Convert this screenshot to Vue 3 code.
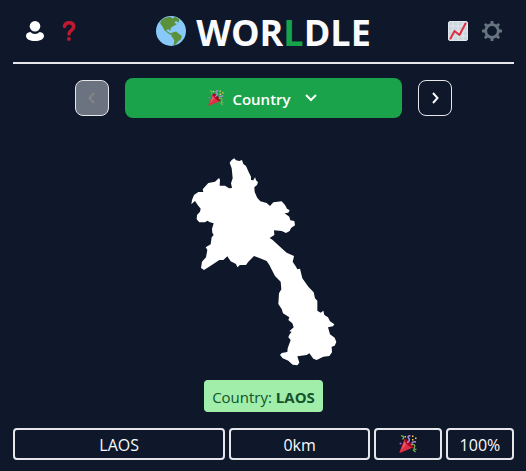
<script setup>
import { ref } from 'vue'

const letters = 'WORLDLE'.split('')
const mode = ref('Country')
const answer = ref('LAOS')
const guess = { distance: '0km', percent: '100%' }
</script>

<template>
  <main class="page">
    <header class="header">
      <nav class="tools">
        <button class="icon-button" type="button" aria-label="Profile">
          <svg width="20" height="20" viewBox="0 0 20 20" fill="#fff">
            <path d="M5.300 11C2.500 11.200 1 12.800 1 15c0 3 4 5 9 5s9-2 9-5c0-2.200-1.500-3.800-4.300-4a6.600 6.600 0 0 1-9.400 0z" />
            <circle cx="10" cy="5.300" r="5.300" />
          </svg>
        </button>
        <button class="icon-button" type="button" aria-label="Help">
          <svg width="20" height="20" viewBox="0 0 20 20">
            <path d="M5.500 5.400C6 3 7.800 1.800 10.200 1.800c2.800 0 4.500 1.500 4.500 3.900 0 3.800-4.700 3.500-4.700 7.200" fill="none" stroke="#be1931" stroke-width="3.600" stroke-linecap="round" />
            <circle cx="9.900" cy="18" r="1.900" fill="#be1931" />
          </svg>
        </button>
      </nav>
      <h1 class="title">
        <svg width="30" height="30" viewBox="0 0 36 36" aria-hidden="true">
          <circle cx="18" cy="18" r="18" fill="#88c9f9" />
          <path fill="#5c913b" d="M6 5L11 2 17 1 20 3 23 1 28 4 27 8 24 6 22 8 25 10 21 12 18 14 17 18 15 16 12 17 16 20 20 21 19 23 15 21 10 17 8 13 5 9z" />
          <path fill="#5c913b" d="M19 20L24 18.500 27 21 31 24 30 28 26 31 24 34 21 35.500 22 29 18.500 24z" />
        </svg>
        <span><span v-for="(l, i) in letters" :key="i" :class="{ accent: i === 3 }">{{ l }}</span></span>
      </h1>
      <nav class="tools">
        <button class="icon-button" type="button" aria-label="Statistics">
          <svg width="20" height="20" viewBox="0 0 20 20">
            <rect x=".5" y=".5" width="19" height="19" rx="1.500" fill="#ccd6dd" stroke="#e1e8ed" />
            <path d="M1 5h18M1 10h18M1 15h18M5 1v18M10 1v18M15 1v18" stroke="#e1e8ed" />
            <path d="M2.500 17.500L6.500 10l5 4L17.500 2.500" fill="none" stroke="#dd2e44" stroke-width="2" stroke-linejoin="round" stroke-linecap="round" />
          </svg>
        </button>
        <button class="icon-button" type="button" aria-label="Settings">
          <svg width="20" height="20" viewBox="0 0 20 20" stroke="#66757f" fill="none">
            <path d="M10 1v2.500M10 16.500V19M1 10h2.500M16.500 10H19M3.800 3.800l1.500 1.500M14.700 14.700l1.500 1.500M3.800 16.200l1.500-1.500M14.700 5.300l1.500-1.500" stroke-width="3" stroke-linecap="round" />
            <circle cx="10" cy="10" r="6.300" stroke-width="2.800" />
          </svg>
        </button>
      </nav>
    </header>

    <section class="rounds">
      <button class="step" type="button" aria-label="Previous round" disabled>
        <svg width="16" height="16" viewBox="0 0 16 16"><path d="M10 3L5.500 8l4.500 5" /></svg>
      </button>
      <button class="mode" type="button" aria-haspopup="listbox">
        <svg width="16" height="16" viewBox="0 0 36 36"><use href="#party" /></svg>
        <span class="label">{{ mode }}</span>
        <svg class="chevron" width="16" height="16" viewBox="0 0 16 16"><path d="M3 5l5 5 5-5" /></svg>
      </button>
      <button class="step" type="button" aria-label="Next round">
        <svg width="16" height="16" viewBox="0 0 16 16"><path d="M6 3l4.500 5L6 13" /></svg>
      </button>
    </section>

    <svg class="map" width="146" height="208" viewBox="33 24 438 624" role="img" aria-label="Country outline">
      <path fill="#fff" d="M163 25L168 31 178 33 186 30 190 42 198 48 206 66 213 80 213 90 220 91 225 82 229 92 234 96 231 105 223 112 224 126 232 144 241 154 260 159 270 168 280 157 305 154 315 165 321 176 329 181 325 188 314 190 328 200 331 211 343 213 345 226 333 234 329 243 318 249 305 243 282 241 283 255 269 264 278 270 300 290 320 308 342 318 340 328 338 335 348 350 352 358 360 356 367 385 385 410 401 427 405 445 412 452 412 482 422 488 430 482 433 495 444 502 450 514 463 523 459 529 444 532 450 553 464 563 469 576 464 587 455 590 456 607 448 618 430 620 410 630 400 626 388 610 380 615 352 619 358 638 352 646 338 644 325 632 308 625 300 615 305 609 322 606 323 595 332 570 325 562 328 554 335 545 328 544 341 532 337 520 325 510 328 502 309 490 305 477 295 462 297 430 304 418 302 395 285 378 268 345 260 333 240 325 222 318 205 335 198 345 180 345 172 352 168 342 152 334 142 319 130 330 118 330 100 342 85 352 72 360 63 354 66 335 78 322 82 300 77 292 92 283 95 262 101 255 97 248 96 236 101 220 90 217 82 212 75 217 58 217 50 208 51 195 60 185 62 176 53 165 45 153 34 163 36 150 42 135 55 126 70 126 68 118 85 99 105 95 117 84 120 90 119 107 135 107 147 115 156 114 153 100 158 85 155 55 149 38 155 30Z" />
    </svg>

    <p class="answer">{{ mode }}: <strong>{{ answer }}</strong></p>

    <section class="guess">
      <div class="cell name">{{ answer }}</div>
      <div class="cell distance">{{ guess.distance }}</div>
      <div class="cell">
        <svg width="18" height="18" viewBox="0 0 36 36" role="img" aria-label="Correct">
          <g id="party">
            <path fill="#dd2e44" d="M11 8L1 34c-.5 1.500.5 2 2 1.500L28 25C25 17 18 10 11 8z" />
            <path fill="#ea596e" d="M11 13L4 31l10-12z" />
            <path fill="#a0041e" d="M11 8c-1 5 10 18 17 17 1-4-9-17-17-17z" />
            <path fill="none" stroke="#77b255" stroke-width="2.600" d="M4 2c5-1 7 3 3 7M24 20c5-3 9 0 7 4-2 3 0 6 4 4M28 29l5 5" />
            <path fill="none" stroke="#aa8dd8" stroke-width="3" d="M16 15c5-2 6-6 3-9-2-3 0-5 4-4M25 17c3-4 6-4 9-3" />
            <path fill="#ffcc4d" d="M26 1h3v3h-3zM32 5h3v3h-3zM26 8h3v3h-3zM11 2h3v3h-3z" />
            <circle cx="3" cy="17" r="2" fill="#9266cc" />
          </g>
        </svg>
      </div>
      <div class="cell">{{ guess.percent }}</div>
    </section>
  </main>
</template>

<style>
body {
  margin: 0;
  background: #0f172a;
}
</style>

<style scoped>
.page {
  display: flex;
  flex-direction: column;
  align-items: center;
  padding: 0 12px 11px 13px;
  color: #f8fafc;
  font: 16px/24px "Open Sans", "Noto Sans", sans-serif;
}
.header {
  display: flex;
  align-items: center;
  justify-content: space-between;
  align-self: stretch;
  box-sizing: border-box;
  height: 64px;
  padding: 0 12px;
  border-bottom: 2px solid #e5e7eb;
}
.tools {
  display: flex;
  gap: 14px;
}
button {
  font: inherit;
  color: inherit;
  cursor: pointer;
}
.icon-button {
  display: flex;
  padding: 0;
  border: 0;
  background: none;
}
.title {
  display: flex;
  align-items: center;
  gap: 10px;
  margin: 0;
  font-size: 36px;
  line-height: 40px;
  font-weight: 700;
}
.title > span {
  padding-top: 4px;
}
.accent {
  color: #16a34a;
}
.rounds {
  display: flex;
  align-items: center;
  align-self: stretch;
  gap: 16px;
  padding: 14px 62px 0;
}
.step {
  display: flex;
  align-items: center;
  justify-content: center;
  box-sizing: border-box;
  width: 34px;
  height: 36px;
  padding: 0;
  border: 1px solid #e5e7eb;
  border-radius: 8px;
  background: none;
}
.step path,
.chevron path {
  fill: none;
  stroke: currentColor;
  stroke-width: 2;
}
.step:disabled {
  background: #6b7280;
  color: #858585;
  cursor: default;
}
.mode {
  display: flex;
  flex: 1;
  align-items: center;
  justify-content: center;
  gap: 8px;
  height: 40px;
  padding: 0 16px;
  border: 0;
  border-radius: 8px;
  background: #1aa34a;
  color: #fff;
  font-size: 15px;
  font-weight: 600;
}
.label {
  padding-top: 2px;
}
.chevron {
  margin-left: 4px;
}
.map {
  margin-top: 40px;
}
.answer {
  margin: 14px 0 16px;
  padding: 5px 8px 3px;
  border-radius: 4px;
  background: #a0eeaa;
  color: #14532d;
  font-size: 15px;
}
.answer strong {
  font-weight: 700;
}
.guess {
  display: grid;
  grid-template-columns: repeat(7, 1fr);
  align-self: stretch;
  gap: 4px;
}
.cell {
  display: flex;
  align-items: center;
  justify-content: center;
  box-sizing: border-box;
  height: 32px;
  padding-top: 2px;
  border: 2px solid #e5e7eb;
  border-radius: 4px;
}
.cell svg {
  margin-bottom: 2px;
}
.name {
  grid-column: span 3;
}
.distance {
  grid-column: span 2;
}
</style>
